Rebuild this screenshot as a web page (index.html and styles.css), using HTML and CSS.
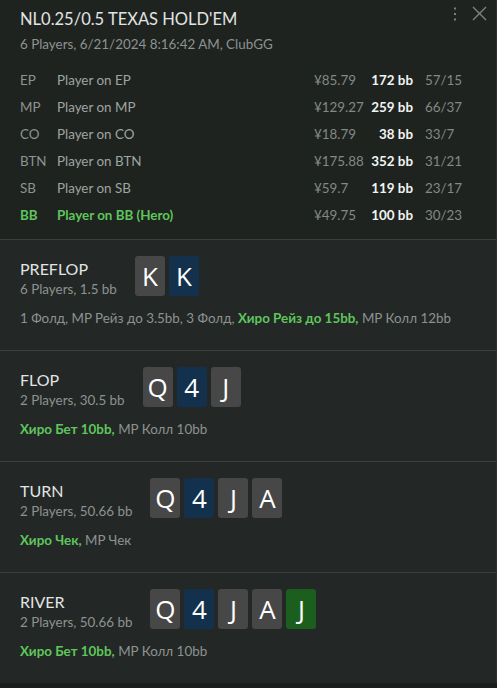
FILE: index.html
```html
<!DOCTYPE html>
<html lang="ru">
<head>
<meta charset="utf-8">
<link rel="stylesheet" href="styles.css">
</head>
<body>
<div class="panel">
  <header class="head">
    <div class="head-top">
      <div class="head-text">
        <div class="title">NL0.25/0.5 TEXAS HOLD'EM</div>
        <div class="sub">6 Players, 6/21/2024 8:16:42 AM, ClubGG</div>
      </div>
      <div class="tools">
        <svg class="kebab" width="4" height="14" viewBox="0 0 4 14"><rect x="1" y="0.5" width="2" height="2" fill="#7a7f7d"/><rect x="1" y="6" width="2" height="2" fill="#7a7f7d"/><rect x="1" y="11.5" width="2" height="2" fill="#7a7f7d"/></svg>
        <svg class="close" width="15" height="15" viewBox="0 0 15 15"><path d="M1 1 L14 14 M14 1 L1 14" stroke="#7f8482" stroke-width="1.4" fill="none"/></svg>
      </div>
    </div>
    <div class="players">
      <div class="row"><span class="pos">EP</span><span class="name">Player on EP</span><span class="money">¥85.79</span><span class="bb">172 bb</span><span class="ratio">57/15</span></div>
      <div class="row"><span class="pos">MP</span><span class="name">Player on MP</span><span class="money">¥129.27</span><span class="bb">259 bb</span><span class="ratio">66/37</span></div>
      <div class="row"><span class="pos">CO</span><span class="name">Player on CO</span><span class="money">¥18.79</span><span class="bb">38 bb</span><span class="ratio">33/7</span></div>
      <div class="row"><span class="pos">BTN</span><span class="name">Player on BTN</span><span class="money">¥175.88</span><span class="bb">352 bb</span><span class="ratio">31/21</span></div>
      <div class="row"><span class="pos">SB</span><span class="name">Player on SB</span><span class="money">¥59.7</span><span class="bb">119 bb</span><span class="ratio">23/17</span></div>
      <div class="row hero"><span class="pos">BB</span><span class="name">Player on BB (Hero)</span><span class="money">¥49.75</span><span class="bb">100 bb</span><span class="ratio">30/23</span></div>
    </div>
  </header>

  <section class="street">
    <div class="street-top">
      <div class="street-info">
        <div class="street-name">PREFLOP</div>
        <div class="street-sub">6 Players, 1.5 bb</div>
      </div>
      <div class="cards"><span class="card gray">K</span><span class="card blue">K</span></div>
    </div>
    <div class="actions">1 Фолд, MP Рейз до 3.5bb, 3 Фолд, <b class="hl">Хиро Рейз до 15bb,</b> MP Колл 12bb</div>
  </section>

  <section class="street">
    <div class="street-top">
      <div class="street-info">
        <div class="street-name">FLOP</div>
        <div class="street-sub">2 Players, 30.5 bb</div>
      </div>
      <div class="cards"><span class="card gray">Q</span><span class="card blue">4</span><span class="card gray">J</span></div>
    </div>
    <div class="actions"><b class="hl">Хиро Бет 10bb,</b> MP Колл 10bb</div>
  </section>

  <section class="street">
    <div class="street-top">
      <div class="street-info">
        <div class="street-name">TURN</div>
        <div class="street-sub">2 Players, 50.66 bb</div>
      </div>
      <div class="cards"><span class="card gray">Q</span><span class="card blue">4</span><span class="card gray">J</span><span class="card gray">A</span></div>
    </div>
    <div class="actions"><b class="hl">Хиро Чек,</b> MP Чек</div>
  </section>

  <section class="street">
    <div class="street-top">
      <div class="street-info">
        <div class="street-name">RIVER</div>
        <div class="street-sub">2 Players, 50.66 bb</div>
      </div>
      <div class="cards"><span class="card gray">Q</span><span class="card blue">4</span><span class="card gray">J</span><span class="card gray">A</span><span class="card green">J</span></div>
    </div>
    <div class="actions"><b class="hl">Хиро Бет 10bb,</b> MP Колл 10bb</div>
  </section>
</div>
</body>
</html>
```

FILE: styles.css
```css
* { box-sizing: border-box; }
html, body {
  margin: 0;
  padding: 0;
  background: #1a1e1d;
  font-family: Lato, "Open Sans", sans-serif;
  color: #9a9d9c;
}
.panel {
  width: 497px;
  border-right: 1px solid #2c3130;
}
.head {
  background: #1e2320;
  padding: 8px 0 11px 20px;
}
.head-top {
  display: flex;
  justify-content: space-between;
  align-items: flex-start;
}
.title {
  font-size: 16.5px;
  line-height: 22px;
  color: #e2e4e3;
}
.sub {
  font-size: 13.4px;
  line-height: 18px;
  margin-top: 5px;
  color: #8e9290;
}
.tools {
  display: flex;
  align-items: center;
  gap: 15px;
  padding: 0 9px 0 0;
  margin-top: -2px;
}
.kebab { display: block; margin-top: 1px; }
.close { display: block; }
.players {
  margin-top: 13px;
  padding-right: 24px;
}
.row {
  display: grid;
  grid-template-columns: 37px 1fr 52px 47px 59px;
  height: 27px;
  align-items: center;
  font-size: 13.4px;
  white-space: nowrap;
}
.pos { color: #8e9290; }
.name { color: #9fa3a1; }
.money { color: #848886; }
.bb {
  color: #f2f3f3;
  font-weight: 700;
  text-align: right;
}
.ratio {
  padding-left: 12px;
  color: #848886;
}
.row.hero .pos, .row.hero .name {
  color: #5fc55c;
  font-weight: 700;
}
.street {
  background: #232827;
  border-top: 1px solid #3b403e;
  padding: 16px 20px 23px;
}
.street-top {
  display: flex;
  align-items: flex-start;
  gap: 18px;
}
.street-info {
  padding-top: 2px;
}
.street-name {
  font-size: 16px;
  line-height: 22px;
  color: #e2e4e3;
}
.street-sub {
  font-size: 13.4px;
  line-height: 18px;
  color: #8e9290;
}
.cards {
  display: flex;
  gap: 4px;
}
.card {
  width: 30px;
  height: 40px;
  border-radius: 3px;
  display: flex;
  align-items: center;
  justify-content: center;
  font-family: "Open Sans", sans-serif;
  font-size: 26px;
  color: #ffffff;
}
.card.gray { background: #474747; }
.card.blue { background: #13314c; }
.card.green { background: #1c5e1d; }
.actions {
  margin-top: 11px;
  font-size: 13.4px;
  line-height: 18px;
  color: #8e9290;
}
.hl {
  color: #5fc55c;
  font-weight: 700;
}
```
